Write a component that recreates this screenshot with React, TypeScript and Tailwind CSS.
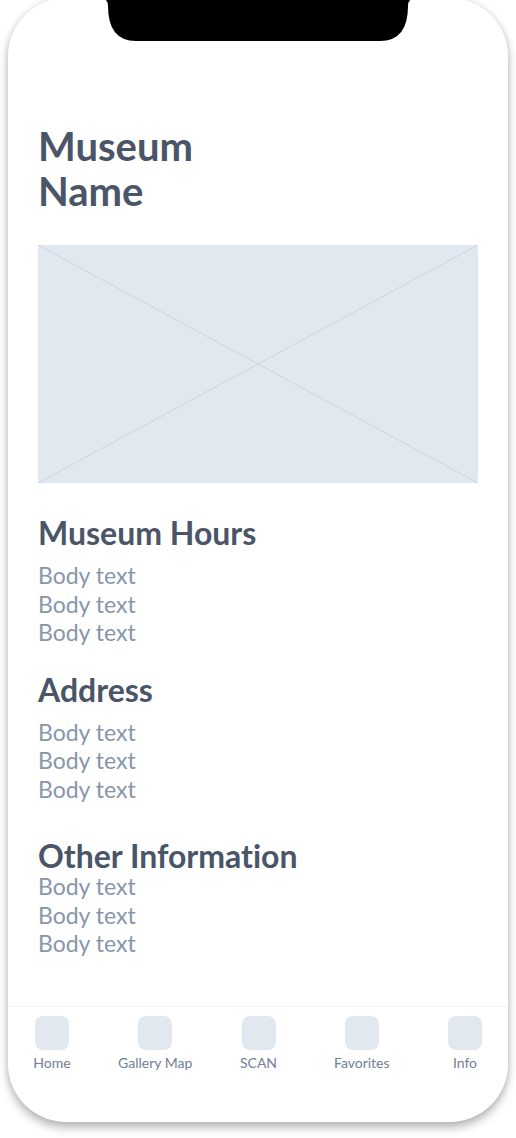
import React from 'react';

const navItems = ['Home', 'Gallery Map', 'SCAN', 'Favorites', 'Info'];

const Section: React.FC<{ title: string; className?: string; titleClass?: string }> = ({ title, className, titleClass }) => (
  <div className={className}>
    <h2 className={`text-[32px] font-bold text-[#4a5568] [font-variant-ligatures:none] ${titleClass ?? ''}`}>{title}</h2>
    <div className="text-[23px] leading-[28.5px] text-[#8796ab]">
      <p>Body text</p>
      <p>Body text</p>
      <p>Body text</p>
    </div>
  </div>
);

export default function App() {
  return (
    <div className="w-[516px] h-[1138px] bg-white overflow-hidden font-['Lato',sans-serif]">
      <div className="relative mx-[8px] mt-[-2px] h-[1124px] rounded-[58px] bg-white shadow-[0_6px_10px_rgba(0,0,0,0.25),0_0_6px_rgba(0,0,0,0.12)] flex flex-col">
        {/* notch */}
        <svg className="absolute left-[95px] top-0" width="310" height="43" viewBox="0 0 310 43">
          <path
            d="M0 0 H310 Q305 2 305 8 Q305 43 277 43 H33 Q5 43 5 8 Q5 2 0 0 Z"
            fill="#000"
          />
        </svg>

        <main className="flex-1 px-[30px] pt-[126px]">
          <h1 className="text-[40px] leading-[45px] font-bold text-[#4a5568]">
            Museum
            <br />
            Name
          </h1>

          <div className="mt-[31px] h-[238px] bg-[#e2e8f0]">
            <svg className="w-full h-full" viewBox="0 0 441 238" preserveAspectRatio="none">
              <line x1="0" y1="0" x2="441" y2="238" stroke="#cbd5e0" strokeWidth="1" />
              <line x1="441" y1="0" x2="0" y2="238" stroke="#cbd5e0" strokeWidth="1" />
            </svg>
          </div>

          <Section title="Museum Hours" className="mt-[30px]" titleClass="leading-[40px] mb-[8px]" />
          <Section title="Address" className="mt-[23px]" titleClass="leading-[40px] mb-[8px]" />
          <Section title="Other Information" className="mt-[37px]" titleClass="leading-[32px]" />
        </main>

        <nav className="border-t border-[#edf2f7] flex justify-between pl-[26px] pr-[25px] pt-[9px] h-[116px]">
          {navItems.map((label) => (
            <div key={label} className="w-[36px] flex flex-col items-center">
              <div className="w-[34px] h-[34px] rounded-[8px] bg-[#e2e8f0]" />
              <span className="mt-[3px] text-[14px] leading-[20px] text-[#718096] whitespace-nowrap">{label}</span>
            </div>
          ))}
        </nav>
      </div>
    </div>
  );
}
